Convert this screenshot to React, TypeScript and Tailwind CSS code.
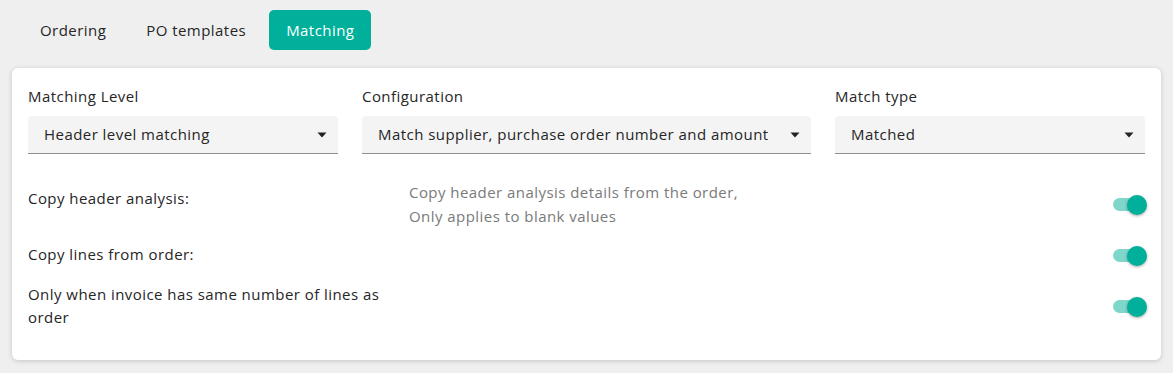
import * as React from "react";

const font = { fontFamily: "'Open Sans', 'Noto Sans', sans-serif" };

function Select({ value, className }: { value: string; className: string }) {
  return (
    <div
      className={`flex h-[38px] items-center justify-between rounded-t-[4px] border-b border-[#8f8f8f] bg-[#f4f4f4] pl-4 pr-[11px] text-[15px] tracking-[0.45px] text-[#262626] ${className}`}
    >
      <span>{value}</span>
      <svg width="10" height="6" viewBox="0 0 10 6" className="mt-[1px]">
        <path d="M0.5 0.5 L9.5 0.5 L5 5.5 Z" fill="#222" />
      </svg>
    </div>
  );
}

function Toggle() {
  return (
    <div className="relative h-5 w-[34px]">
      <div className="absolute left-0 top-[3px] h-[13px] w-[30px] rounded-full bg-[#7fd6cb]" />
      <div className="absolute right-0 top-0 h-5 w-5 rounded-full bg-[#00b09b] shadow-[0_1px_3px_rgba(0,0,0,0.35)]" />
    </div>
  );
}

function Row({ label, hint, className }: { label: React.ReactNode; hint?: React.ReactNode; className?: string }) {
  return (
    <div className={`flex items-center ${className ?? ""}`}>
      <div className="w-[381px] text-[15px] leading-[23px] tracking-[0.45px] text-[#262626]">{label}</div>
      <div className="flex-1 text-[15px] leading-6 tracking-[0.45px] text-[#7a7a7a]">{hint}</div>
      <div className="mr-[-2px] mt-[2px]">
        <Toggle />
      </div>
    </div>
  );
}

export default function App() {
  const [tab, setTab] = React.useState("Matching");
  const tabs = ["Ordering", "PO templates", "Matching"];

  return (
    <div style={font} className="min-h-[373px] w-[1173px] bg-[#efefef] pt-[10px]">
      <div className="flex items-center gap-[6px] pl-[23px]">
        {tabs.map((t) => (
          <button
            key={t}
            onClick={() => setTab(t)}
            className={`h-[40px] rounded-[5px] px-[17px] text-[15px] tracking-[0.45px] ${
              tab === t ? "bg-[#00b09b] text-white" : "text-[#262626]"
            }`}
          >
            {t}
          </button>
        ))}
      </div>

      <div className="mx-3 mt-[18px] rounded-[6px] bg-white px-4 pb-[31px] pt-[18px] shadow-[0_1px_5px_rgba(0,0,0,0.18)]">
        <div className="grid grid-cols-[310px_449px_310px] gap-x-6">
          <div>
            <div className="text-[15px] leading-5 tracking-[0.45px] text-[#262626]">Matching Level</div>
            <Select value="Header level matching" className="mt-[10px]" />
          </div>
          <div>
            <div className="text-[15px] leading-5 tracking-[0.45px] text-[#262626]">Configuration</div>
            <Select value="Match supplier, purchase order number and amount" className="mt-[10px]" />
          </div>
          <div>
            <div className="text-[15px] leading-5 tracking-[0.45px] text-[#262626]">Match type</div>
            <Select value="Matched" className="mt-[10px]" />
          </div>
        </div>

        <Row
          className="mt-[26px]"
          label={<span className="relative top-[-6px]">Copy header analysis:</span>}
          hint={
            <>
              Copy header analysis details from the order,
              <br />
              Only applies to blank values
            </>
          }
        />
        <Row className="mt-[15px]" label="Copy lines from order:" />
        <Row
          className="mt-[17px]"
          label={
            <>
              Only when invoice has same number of lines as
              <br />
              order
            </>
          }
        />
      </div>
    </div>
  );
}
